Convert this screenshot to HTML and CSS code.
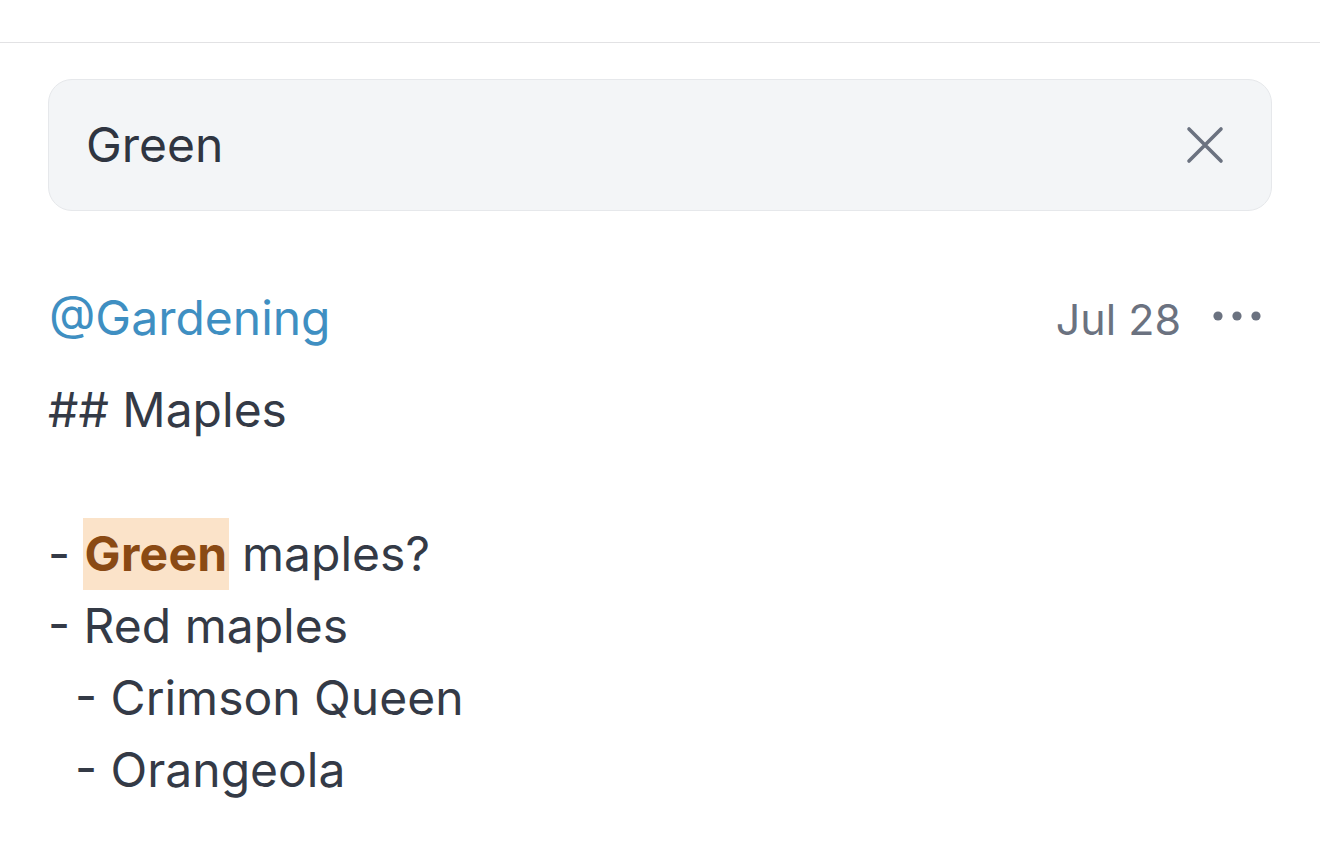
FILE: index.html
```html
<!DOCTYPE html>
<html>
<head>
<meta charset="utf-8">
<link rel="stylesheet" href="styles.css">
</head>
<body>
<div class="topbar"></div>
<main class="page">
  <div class="search">
    <span class="search-text">Green</span>
    <svg class="clear" width="40" height="40" viewBox="0 0 40 40" aria-hidden="true">
      <path d="M4 4 L36 36 M36 4 L4 36" stroke="#6b7280" stroke-width="3.6" stroke-linecap="round" fill="none"/>
    </svg>
  </div>
  <article class="note">
    <div class="note-head">
      <span class="tag">@Gardening</span>
      <div class="meta">
        <span class="date">Jul 28</span>
        <svg class="more" width="52" height="12" viewBox="0 0 52 12" aria-hidden="true">
          <circle cx="6" cy="6" r="4.6" fill="#6b7280"/>
          <circle cx="25" cy="6" r="4.6" fill="#6b7280"/>
          <circle cx="44" cy="6" r="4.6" fill="#6b7280"/>
        </svg>
      </div>
    </div>
    <div class="note-body">## Maples

- <mark class="hit">Green</mark> maples?
- Red maples
  - Crimson Queen
  - Orangeola</div>
  </article>
</main>
</body>
</html>
```

FILE: styles.css
```css
html, body {
  margin: 0;
  padding: 0;
  background: #ffffff;
}
body {
  font-family: Inter, "Noto Sans", sans-serif;
  color: #343a46;
  font-size: 48px;
}
.topbar {
  height: 42px;
  border-bottom: 1px solid #e2e2e4;
}
.page {
  padding: 36px 48px 0 48px;
}
.search {
  box-sizing: border-box;
  height: 132px;
  background: #f3f5f7;
  border: 1px solid #e6e8eb;
  border-radius: 24px;
  display: flex;
  align-items: center;
  justify-content: space-between;
  padding: 0 46px 0 37px;
}
.search-text {
  font-size: 48px;
  color: #2f3541;
  line-height: 1;
}
.clear {
  display: block;
}
.note {
  margin-top: 71px;
}
.note-head {
  display: flex;
  align-items: center;
  justify-content: space-between;
  height: 72px;
  padding-right: 8px;
}
.tag {
  color: #3f8fc2;
  line-height: 72px;
  padding-left: 1px;
}
.meta {
  display: flex;
  align-items: center;
  gap: 31px;
}
.date {
  color: #6b7280;
  font-size: 43px;
  margin-top: 2px;
}
.more {
  display: block;
  margin-top: -4px;
}
.note-body {
  margin-top: 20px;
  white-space: pre-wrap;
  line-height: 72px;
  color: #343a46;
}
.hit {
  display: inline-block;
  line-height: 72px;
  background: #fbe3c9;
  color: #8a4a14;
  font-weight: 700;
  letter-spacing: 0.3px;
  padding: 0 1px 0 2px;
  margin-left: -1px;
}
```
